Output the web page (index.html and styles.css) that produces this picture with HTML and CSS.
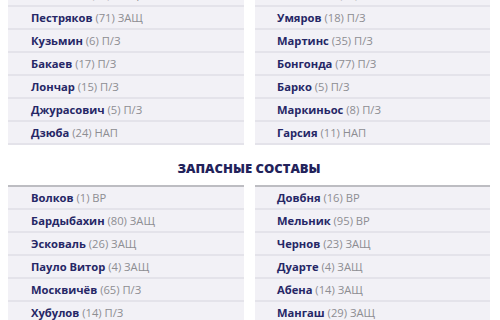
FILE: index.html
```html
<!DOCTYPE html>
<html lang="ru">
<head>
<meta charset="utf-8">
<link rel="stylesheet" href="styles.css">
</head>
<body>
<div class="page">
  <div class="lineup lineup-top">
    <ul class="col">
      <li class="row"><b>Сильянов</b> <span>(14) ЗАЩ</span></li>
      <li class="row"><b>Пестряков</b> <span>(71) ЗАЩ</span></li>
      <li class="row"><b>Кузьмин</b> <span>(6) П/З</span></li>
      <li class="row"><b>Бакаев</b> <span>(17) П/З</span></li>
      <li class="row"><b>Лончар</b> <span>(15) П/З</span></li>
      <li class="row"><b>Джурасович</b> <span>(5) П/З</span></li>
      <li class="row"><b>Дзюба</b> <span>(24) НАП</span></li>
    </ul>
    <ul class="col">
      <li class="row"><b>Литвинов</b> <span>(97) П/З</span></li>
      <li class="row"><b>Умяров</b> <span>(18) П/З</span></li>
      <li class="row"><b>Мартинс</b> <span>(35) П/З</span></li>
      <li class="row"><b>Бонгонда</b> <span>(77) П/З</span></li>
      <li class="row"><b>Барко</b> <span>(5) П/З</span></li>
      <li class="row"><b>Маркиньос</b> <span>(8) П/З</span></li>
      <li class="row"><b>Гарсия</b> <span>(11) НАП</span></li>
    </ul>
  </div>
  <h2 class="title">ЗАПАСНЫЕ СОСТАВЫ</h2>
  <div class="lineup lineup-subs">
    <ul class="col">
      <li class="row"><b>Волков</b> <span>(1) ВР</span></li>
      <li class="row"><b>Бардыбахин</b> <span>(80) ЗАЩ</span></li>
      <li class="row"><b>Эсковаль</b> <span>(26) ЗАЩ</span></li>
      <li class="row"><b>Пауло Витор</b> <span>(4) ЗАЩ</span></li>
      <li class="row"><b>Москвичёв</b> <span>(65) П/З</span></li>
      <li class="row"><b>Хубулов</b> <span>(14) П/З</span></li>
    </ul>
    <ul class="col">
      <li class="row"><b>Довбня</b> <span>(16) ВР</span></li>
      <li class="row"><b>Мельник</b> <span>(95) ВР</span></li>
      <li class="row"><b>Чернов</b> <span>(23) ЗАЩ</span></li>
      <li class="row"><b>Дуарте</b> <span>(4) ЗАЩ</span></li>
      <li class="row"><b>Абена</b> <span>(14) ЗАЩ</span></li>
      <li class="row"><b>Мангаш</b> <span>(29) ЗАЩ</span></li>
    </ul>
  </div>
</div>
</body>
</html>
```

FILE: styles.css
```css
html, body {
  margin: 0;
  padding: 0;
  background: #ffffff;
  overflow: hidden;
}
.page {
  padding: 0 10px 0 8px;
  font-family: "Open Sans", "DejaVu Sans", sans-serif;
}
.lineup {
  display: grid;
  grid-template-columns: 236px 235px;
  column-gap: 11px;
}
.lineup-top {
  margin-top: -16px;
}
.col {
  list-style: none;
  margin: 0;
  padding: 0;
  background: #f2f1f6;
}
.lineup-subs .col {
  border-top: 2px solid #bdbdc2;
}
.row {
  height: 21px;
  line-height: 21px;
  border-bottom: 2px solid #e4e3ea;
  padding-left: 23px;
  font-size: 11.2px;
  white-space: nowrap;
}
.lineup .col + .col .row {
  padding-left: 22px;
}
.row b {
  font-weight: 700;
  color: #262766;
}
.row span {
  color: #8d8d92;
}
.title {
  margin: 0;
  height: 40px;
  padding-top: 16px;
  box-sizing: border-box;
  text-align: center;
  font-size: 13px;
  font-weight: 800;
  color: #22225a;
  line-height: 14px;
}
```
